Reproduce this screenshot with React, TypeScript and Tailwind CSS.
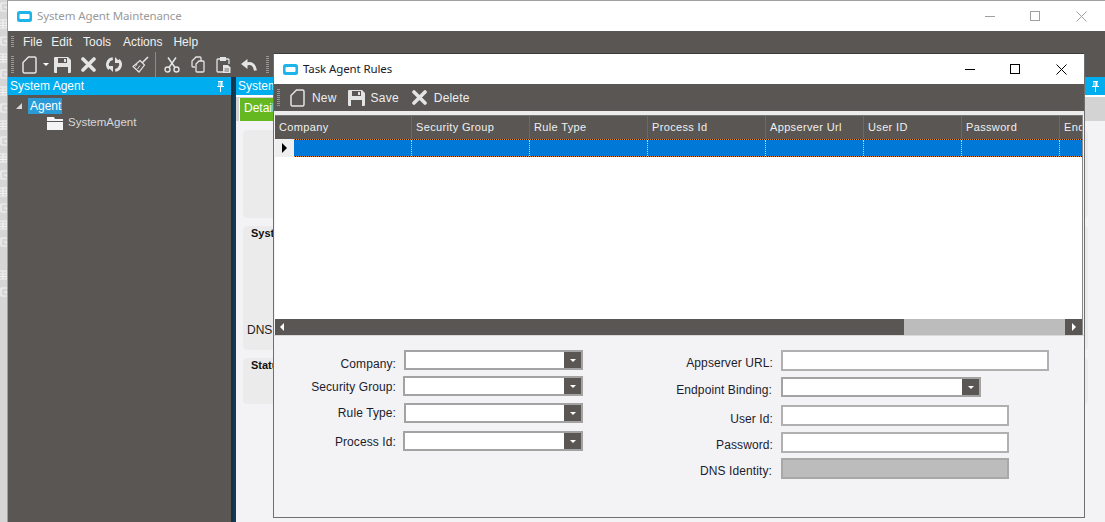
import React from "react";

const ICON = "#e4e4e4";

function AppIcon() {
  return (
    <svg width="15" height="11" viewBox="0 0 15 11" className="shrink-0">
      <rect x="0" y="0" width="15" height="11" rx="2.5" fill="#1db4ea" />
      <rect x="2.5" y="3" width="10" height="5" rx="1" fill="#fff" />
    </svg>
  );
}

function Grip({ h }: { h: string }) {
  return <div className={`w-[3px] ${h} bg-[repeating-linear-gradient(to_bottom,#9a9896_0,#9a9896_1px,#595654_1px,#595654_2px)]`} />;
}

function NewIcon() {
  return (
    <svg width="15" height="18" viewBox="0 0 15 18" className="shrink-0">
      <path d="M6.5 1H12.5Q14 1 14 2.5V15.5Q14 17 12.5 17H2.5Q1 17 1 15.5V6.5Z" fill="none" stroke={ICON} strokeWidth="1.5" />
    </svg>
  );
}
function SaveIcon() {
  return (
    <svg width="17" height="16" viewBox="0 0 17 16" className="shrink-0">
      <path fillRule="evenodd" d="M1 0H14L17 3V15Q17 16 16 16H1Q0 16 0 15V1Q0 0 1 0ZM4 1V6H13V1ZM3 10V16H14V10Z" fill={ICON} />
      <rect x="10" y="2" width="2" height="3" fill={ICON} />
    </svg>
  );
}
function XIcon() {
  return (
    <svg width="15" height="15" viewBox="0 0 15 15" className="shrink-0">
      <path d="M2 2L13 13M13 2L2 13" stroke={ICON} strokeWidth="3.6" strokeLinecap="round" />
    </svg>
  );
}
function RefreshIcon() {
  return (
    <svg width="16" height="17" viewBox="0 0 16 17" className="shrink-0">
      <path d="M6.8 2.6A6 6 0 0 0 3.4 13" fill="none" stroke={ICON} strokeWidth="2.8" />
      <path d="M9.2 14.4A6 6 0 0 0 12.6 4" fill="none" stroke={ICON} strokeWidth="2.8" />
      <path d="M1 10L7 10L7 16Z" fill={ICON} />
      <path d="M15 7L9 7L9 1Z" fill={ICON} />
    </svg>
  );
}
function BroomIcon() {
  return (
    <svg width="17" height="17" viewBox="0 0 17 17" className="shrink-0">
      <path d="M16 1L10.5 6.5" stroke={ICON} strokeWidth="1.6" />
      <path d="M8 4.5L12.5 9L7 16L1 10.5Z" fill="none" stroke={ICON} strokeWidth="1.2" />
      <path d="M5 8L3.5 10.5M8 9.5L5.5 13" stroke={ICON} strokeWidth="1" />
    </svg>
  );
}
function CutIcon() {
  return (
    <svg width="16" height="16" viewBox="0 0 16 16" className="shrink-0">
      <circle cx="3.5" cy="12.5" r="2.5" fill="none" stroke={ICON} strokeWidth="1.4" />
      <circle cx="12.5" cy="12.5" r="2.5" fill="none" stroke={ICON} strokeWidth="1.4" />
      <path d="M5 10.5L12 0.5M11 10.5L4 0.5" stroke={ICON} strokeWidth="1.5" />
    </svg>
  );
}
function CopyIcon() {
  return (
    <svg width="14" height="17" viewBox="0 0 14 17" className="shrink-0">
      <path d="M4 11H2Q1 11 1 10V5L5 1H9Q10 1 10 2V5" fill="none" stroke={ICON} strokeWidth="1.3" />
      <path d="M8 5H12Q13 5 13 6V15Q13 16 12 16H6Q5 16 5 15V8Z" fill="#595654" stroke={ICON} strokeWidth="1.3" />
    </svg>
  );
}
function PasteIcon() {
  return (
    <svg width="15" height="18" viewBox="0 0 15 18" className="shrink-0">
      <path d="M4 3H2Q1 3 1 4V15Q1 16 2 16H7M10 3H12Q13 3 13 4V8" fill="none" stroke={ICON} strokeWidth="1.3" />
      <rect x="4" y="1" width="6" height="4" fill={ICON} />
      <path d="M7 9H12L14.5 11.5V17H7Z" fill={ICON} />
      <path d="M8.5 13H13M8.5 15H13" stroke="#595654" strokeWidth="0.8" />
    </svg>
  );
}
function UndoIcon() {
  return (
    <svg width="16" height="12" viewBox="0 0 16 12" className="shrink-0">
      <path d="M0 5L6.5 0V10Z" fill={ICON} />
      <path d="M5 5Q13 2.5 14.5 11.5" fill="none" stroke={ICON} strokeWidth="3" />
    </svg>
  );
}
function Pin() {
  return (
    <svg width="9" height="11" viewBox="0 0 9 11">
      <path d="M2 0H7V1H6.5V5H8V6H5V11H4V6H1V5H2.5V1H2Z" fill="#fff" />
      <rect x="3.4" y="1" width="1" height="4" fill="#00adef" />
    </svg>
  );
}
function WinControls({ color }: { color: string }) {
  return (
    <div className="flex items-center">
      <svg width="10" height="10" viewBox="0 0 10 10"><path d="M0 5.5H10" stroke={color} strokeWidth="1" /></svg>
      <svg width="10" height="10" viewBox="0 0 10 10" className="ml-[35px]"><rect x="0.5" y="0.5" width="9" height="9" fill="none" stroke={color} /></svg>
      <svg width="11" height="11" viewBox="0 0 11 11" className="ml-[36px]"><path d="M0.5 0.5L10.5 10.5M10.5 0.5L0.5 10.5" stroke={color} strokeWidth="1" /></svg>
    </div>
  );
}

function SideGlyphs() {
  const ys = [2, 19, 36, 53, 69, 86, 103, 120, 136, 153, 170, 187, 203, 220, 237, 270, 287];
  return (
    <div className="w-[7px] h-full overflow-hidden bg-[#d6d6d6] relative">
      {ys.map((y, i) => (
        <svg key={y} width="8" height="10" viewBox="0 0 8 10" className="absolute left-0" style={{ top: y }}>
          {i % 2 === 0 ? (
            <path d="M7 1H2Q1 1 1 2V8Q1 9 2 9H7M4 5H7V7" fill="none" stroke="#f4f4f4" strokeWidth="1.2" />
          ) : (
            <path d="M0 1H7V9H0M0 4H7M0 6.5H7M3 1V9" fill="none" stroke="#f4f4f4" strokeWidth="1" />
          )}
        </svg>
      ))}
    </div>
  );
}

function Combo({ w, ml = "" }: { w: string; ml?: string }) {
  return (
    <div className={`${w} ${ml} h-[20px] border-2 border-[#a3a3a3] bg-white flex justify-end shrink-0`}>
      <div className="w-[17px] h-full bg-[#595654] flex items-center justify-center">
        <div className="w-0 h-0 border-l-[3px] border-r-[3px] border-t-[3px] border-l-transparent border-r-transparent border-t-white" />
      </div>
    </div>
  );
}

function Field({ label, labelW, className, children }: { label: string; labelW: string; className: string; children: React.ReactNode }) {
  return (
    <div className={`flex items-center ${className}`}>
      <div className={`${labelW} text-right text-[12px] tracking-[0.1px] text-[#1c1c2c] leading-none shrink-0`}>{label}</div>
      {children}
    </div>
  );
}

const cols: [string, string][] = [
  ["Company", "w-[137px]"],
  ["Security Group", "w-[118px]"],
  ["Rule Type", "w-[118px]"],
  ["Process Id", "w-[118px]"],
  ["Appserver Url", "w-[98px]"],
  ["User ID", "w-[98px]"],
  ["Password", "w-[98px]"],
  ["End", "w-[30px]"],
];

const dots = "h-px bg-[repeating-linear-gradient(to_right,#e8902c_0,#e8902c_1px,#1a1a1a_1px,#1a1a1a_2px)] shrink-0";

function Group({ className, children }: { className: string; children?: React.ReactNode }) {
  return <div className={`w-[845px] rounded-[4px] bg-[#ebebeb] relative ${className}`}>{children}</div>;
}

export default function App() {
  const sans = "font-['Liberation_Sans',Arial,sans-serif]";
  const ui = "font-['Noto_Sans','Liberation_Sans',sans-serif]";
  return (
    <div className={`relative flex w-[1105px] h-[522px] overflow-hidden bg-[#f3f3f6] ${sans}`}>
      <SideGlyphs />
      <div className="w-px h-full bg-[#9e9e9e]" />
      <div className="flex-1 flex flex-col min-w-0">
        {/* Title */}
        <div className="h-[31px] border-t border-[#a0a0a0] bg-white flex items-center pl-[9px] pr-[18px] shrink-0">
          <AppIcon />
          <span className={`ml-[5px] text-[11.5px] tracking-[-0.12px] text-[#9a9a9a] ${ui}`}>System Agent Maintenance</span>
          <div className="ml-auto"><WinControls color="#a0a0a0" /></div>
        </div>
        {/* Menu */}
        <div className="h-[21px] bg-[#595654] flex items-center pl-[3px] text-[12px] text-[#f0f0f0] shrink-0">
          <Grip h="h-[11px]" />
          <span className="ml-[9px]">File</span>
          <span className="ml-[9px]">Edit</span>
          <span className="ml-[11px]">Tools</span>
          <span className="ml-[12px]">Actions</span>
          <span className="ml-[11px]">Help</span>
        </div>
        {/* Toolbar */}
        <div className="h-[25px] bg-[#595654] flex items-center pl-[3px] shrink-0">
          <Grip h="h-[18px]" />
          <div className="ml-[8px]"><NewIcon /></div>
          <div className="ml-[6px] w-0 h-0 border-l-[3px] border-r-[3px] border-t-[3px] border-l-transparent border-r-transparent border-t-white" />
          <div className="ml-[5px]"><SaveIcon /></div>
          <div className="ml-[10px]"><XIcon /></div>
          <div className="ml-[10px]"><RefreshIcon /></div>
          <div className="ml-[10px]"><BroomIcon /></div>
          <div className="ml-[6px] w-px h-[25px] bg-[#8d8b89]" />
          <div className="ml-[8px]"><CutIcon /></div>
          <div className="ml-[11px]"><CopyIcon /></div>
          <div className="ml-[11px]"><PasteIcon /></div>
          <div className="ml-[10px]"><UndoIcon /></div>
          <div className="ml-[9px]"><Grip h="h-[18px]" /></div>
        </div>
        <div className="flex-1 flex min-h-0">
          {/* Left panel */}
          <div className="w-[223px] flex flex-col bg-[#595654] shrink-0">
            <div className="h-[18px] bg-[#00adef] flex items-center justify-between pl-[2px] pr-[6px] text-[12px] text-white">
              <span>System Agent</span>
              <Pin />
            </div>
            <div className="pt-[3px] pl-[8px] text-[12px]">
              <div className="flex items-center h-[16px]">
                <div className="w-0 h-0 border-b-[6px] border-l-[6px] border-b-[#d8d8d8] border-l-transparent" />
                <span className="ml-[6px] h-[16px] w-[34px] bg-[#2a9bd6] pl-[2px] leading-[16px] text-white">Agent</span>
              </div>
              <div className="flex items-center h-[16px] ml-[31px] mt-[1px]">
                <svg width="16" height="13" viewBox="0 0 16 13">
                  <path d="M0 0H7L8 2H16V4H0Z" fill="#f4f4f4" />
                  <rect x="0" y="5" width="16" height="8" fill="#f4f4f4" />
                </svg>
                <span className="ml-[5px] text-[11.5px] text-[#d8d8d8]">SystemAgent</span>
              </div>
            </div>
          </div>
          {/* Splitter */}
          <div className="w-[5px] shrink-0 flex">
            <div className="w-[2px] bg-[#1c2f3c]" />
            <div className="w-[3px] bg-[#0c3c5c]" />
          </div>
          {/* Right panel */}
          <div className="flex-1 flex flex-col min-w-0 bg-[#f3f3f6]">
            <div className="h-[18px] bg-[#00adef] flex items-center justify-between pl-[2px] pr-[5px] text-[12px] text-white shrink-0">
              <span>System Agent</span>
              <Pin />
            </div>
            <div className="h-[2px] bg-white shrink-0" />
            <div className="h-[24px] bg-[#d3d3d3] pl-[3px] shrink-0 flex items-end">
              <div className="w-[60px] h-[23px] bg-[#66b821] border-l border-white pl-[4px] text-[12px] leading-[20px] text-white">Detail</div>
            </div>
            <div className="pl-[7px] pt-[9px] flex flex-col gap-[8px]">
              <Group className="h-[88px]" />
              <Group className="h-[124px]">
                <span className="absolute left-[8px] top-[-1px] text-[11px] font-bold text-[#111]">System</span>
                <span className="absolute left-[4px] top-[95px] text-[12px] text-[#222]">DNS</span>
              </Group>
              <Group className="h-[46px]">
                <span className="absolute left-[8px] top-[-1px] text-[11px] font-bold text-[#111]">Status</span>
              </Group>
            </div>
          </div>
        </div>
      </div>

      {/* Modal window */}
      <div className="absolute left-[273px] top-[53px] w-[812px] h-[465px] border border-[#6f6f6f] border-t-[#3c3c3c] bg-[#f3f3f6] flex flex-col">
        <div className="h-[30px] bg-white flex items-center pl-[9px] pr-[17px] shrink-0">
          <AppIcon />
          <span className={`ml-[5px] text-[11.5px] tracking-[-0.12px] text-[#1a1a2a] ${ui}`}>Task Agent Rules</span>
          <div className="ml-auto"><WinControls color="#000" /></div>
        </div>
        <div className="h-[27px] bg-[#595654] flex items-center pl-[3px] text-[12px] tracking-[0.2px] text-[#eeeeee] shrink-0">
          <Grip h="h-[18px]" />
          <div className="ml-[10px]"><NewIcon /></div>
          <span className="ml-[7px]">New</span>
          <div className="ml-[11px]"><SaveIcon /></div>
          <span className="ml-[6px]">Save</span>
          <div className="ml-[13px]"><XIcon /></div>
          <span className="ml-[7px]">Delete</span>
        </div>
        <div className="h-[4px] bg-[#ececec] shrink-0" />
        {/* Grid */}
        <div className="mx-px border-r border-[#8a8a8a] flex flex-col h-[204px] shrink-0 bg-white overflow-hidden">
          <div className="h-[24px] bg-[#595654] flex shrink-0 border-t border-[#777]">
            {cols.map(([c, w]) => (
              <div key={c} className={`${w} shrink-0 h-full border-r border-[#6b6967] pl-[4px] text-[11px] tracking-[0.35px] leading-[23px] text-[#f0f0f0] overflow-hidden whitespace-nowrap`}>{c}</div>
            ))}
          </div>
          <div className="h-[18px] flex shrink-0">
            <div className="w-[19px] bg-[#efefef] flex items-center pl-[7px] shrink-0">
              <div className="w-0 h-0 border-t-[5px] border-b-[5px] border-l-[5px] border-t-transparent border-b-transparent border-l-black" />
            </div>
            <div className="flex-1 bg-[#0078d7] flex flex-col">
              <div className={dots} />
              <div className="flex-1 flex">
                {[118, 118, 118, 118, 98, 98, 98].map((w, i) => (
                  <div key={i} className="shrink-0 border-r border-dotted border-[#c8d8e8]" style={{ width: w }} />
                ))}
              </div>
              <div className={dots} />
            </div>
          </div>
          <div className="flex-1 bg-white" />
        </div>
        {/* Scrollbar */}
        <div className="mx-px h-[16px] bg-[#bcbcbc] flex shrink-0 border-r border-[#8a8a8a]">
          <div className="w-[629px] bg-[#595654] flex items-center pl-[5px]">
            <div className="w-0 h-0 border-t-[4px] border-b-[4px] border-r-[4px] border-t-transparent border-b-transparent border-r-white" />
          </div>
          <div className="flex-1" />
          <div className="w-[17px] bg-[#595654] flex items-center justify-center">
            <div className="w-0 h-0 border-t-[4px] border-b-[4px] border-l-[4px] border-t-transparent border-b-transparent border-l-white" />
          </div>
        </div>
        {/* Form */}
        <div className="flex flex-1 min-h-0 border-t border-[#d8d8d8]">
          <div className="w-[309px] flex flex-col pt-[14px] shrink-0">
            <Field label="Company:" labelW="w-[122px] pt-[8px]" className=""><Combo w="w-[179px]" ml="ml-[8px]" /></Field>
            <Field label="Security Group:" labelW="w-[122px] pt-[2px]" className="mt-[6px]"><Combo w="w-[180px]" ml="ml-[7px]" /></Field>
            <Field label="Rule Type:" labelW="w-[122px]" className="mt-[7px]"><Combo w="w-[179px]" ml="ml-[8px]" /></Field>
            <Field label="Process Id:" labelW="w-[122px] pt-[2px]" className="mt-[8px]"><Combo w="w-[180px]" ml="ml-[7px]" /></Field>
          </div>
          <div className="flex-1 flex flex-col pt-[14px]">
            <Field label="Appserver URL:" labelW="w-[190px] pt-[5px]" className=""><div className="ml-[8px] w-[268px] h-[21px] border-2 border-[#b0b0b0] bg-white" /></Field>
            <Field label="Endpoint Binding:" labelW="w-[189px] pt-[6px]" className="mt-[6px]"><Combo w="w-[200px]" ml="ml-[9px]" /></Field>
            <Field label="User Id:" labelW="w-[190px] pt-[7px]" className="mt-[8px]"><div className="ml-[8px] w-[228px] h-[21px] border-2 border-[#b0b0b0] bg-white" /></Field>
            <Field label="Password:" labelW="w-[190px] pt-[5px]" className="mt-[6px]"><div className="ml-[8px] w-[228px] h-[21px] border-2 border-[#b0b0b0] bg-white" /></Field>
            <Field label="DNS Identity:" labelW="w-[189px] pt-[5px]" className="mt-[5px]"><div className="ml-[9px] w-[228px] h-[21px] border-2 border-[#a8a8a8] bg-[#bcbcbc]" /></Field>
          </div>
        </div>
      </div>
    </div>
  );
}
